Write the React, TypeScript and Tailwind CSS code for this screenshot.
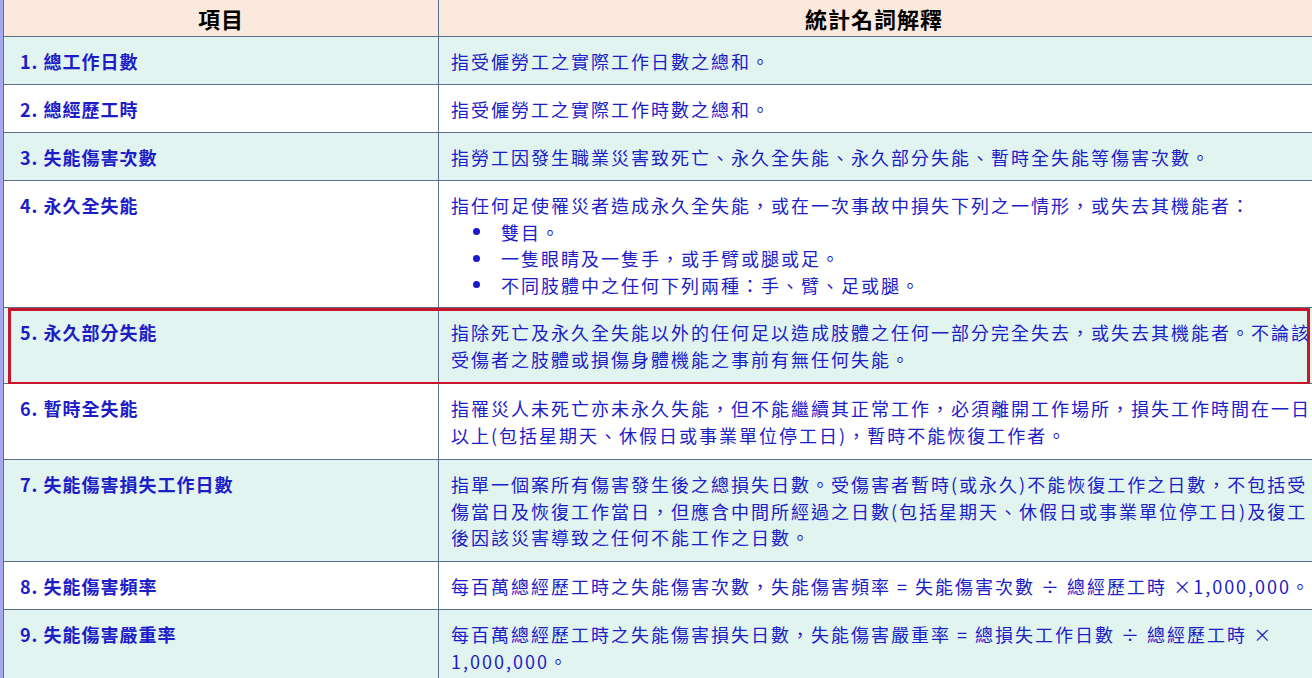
import React from "react";

const rows: { t: string; d: React.ReactNode; red?: boolean; h: number }[] = [
  { t: "1. 總工作日數", d: "指受僱勞工之實際工作日數之總和。", h: 48 },
  { t: "2. 總經歷工時", d: "指受僱勞工之實際工作時數之總和。", h: 48 },
  { t: "3. 失能傷害次數", d: "指勞工因發生職業災害致死亡、永久全失能、永久部分失能、暫時全失能等傷害次數。", h: 48 },
  {
    t: "4. 永久全失能",
    d: (
      <>
        <div>指任何足使罹災者造成永久全失能，或在一次事故中損失下列之一情形，或失去其機能者：</div>
        {["雙目。", "一隻眼睛及一隻手，或手臂或腿或足。", "不同肢體中之任何下列兩種：手、臂、足或腿。"].map((s) => (
          <div key={s} className="flex items-center">
            <span className="w-[50px] flex justify-center"><span className="w-[7px] h-[7px] rounded-full bg-[#1a1acc]" /></span>
            <span>{s}</span>
          </div>
        ))}
      </>
    ),
    h: 127,
  },
  {
    t: "5. 永久部分失能",
    d: (
      <>
        指除死亡及永久全失能以外的任何足以造成肢體之任何一部分完全失去，或失去其機能者。不論該
        <br />
        受傷者之肢體或損傷身體機能之事前有無任何失能。
      </>
    ),
    red: true,
    h: 76,
  },
  {
    t: "6. 暫時全失能",
    d: (
      <>
        指罹災人未死亡亦未永久失能，但不能繼續其正常工作，必須離開工作場所，損失工作時間在一日
        <br />
        以上(包括星期天、休假日或事業單位停工日)，暫時不能恢復工作者。
      </>
    ),
    h: 76,
  },
  {
    t: "7. 失能傷害損失工作日數",
    d: (
      <>
        指單一個案所有傷害發生後之總損失日數。受傷害者暫時(或永久)不能恢復工作之日數，不包括受
        <br />
        傷當日及恢復工作當日，但應含中間所經過之日數(包括星期天、休假日或事業單位停工日)及復工
        <br />
        後因該災害導致之任何不能工作之日數。
      </>
    ),
    h: 102,
  },
  { t: "8. 失能傷害頻率", d: "每百萬總經歷工時之失能傷害次數，失能傷害頻率 = 失能傷害次數 ÷ 總經歷工時 ×1,000,000。", h: 48 },
  {
    t: "9. 失能傷害嚴重率",
    d: (
      <>
        每百萬總經歷工時之失能傷害損失日數，失能傷害嚴重率 = 總損失工作日數 ÷ 總經歷工時 ×
        <br />
        1,000,000。
      </>
    ),
    h: 80,
  },
];

export default function App() {
  return (
    <div
      className="w-[1312px] h-[678px] overflow-hidden bg-white flex"
      style={{ fontFamily: '"Noto Sans CJK TC", "Noto Sans", sans-serif' }}
    >
      <div className="w-[3px] shrink-0 bg-[#a8a8f0]" />
      <div className="w-[1340px] shrink-0 border-l border-[#5a6f8c]">
        <div className="flex h-[37px] bg-[#fbe9de] border-b border-[#5a6f8c] text-[22px] font-bold text-black tracking-[1px]">
          <div className="w-[435px] shrink-0 border-r border-[#5a6f8c] flex items-center justify-center">項目</div>
          <div className="w-[870px] flex items-center justify-center">統計名詞解釋</div>
        </div>
        {rows.map((r, i) => (
          <div
            key={i}
            className={`relative flex border-b border-[#5a6f8c] text-[18px] leading-[26.5px] tracking-[2px] text-[#1d1dc8] ${i % 2 === 0 ? "bg-[#e1f4f0]" : "bg-white"}`}
            style={{ height: r.h }}
          >
            <div className="w-[435px] shrink-0 border-r border-[#5a6f8c] pl-[16px] pt-[11px] font-bold text-[18px] tracking-[1px]">{r.t}</div>
            <div className="pl-[12px] pt-[11px] whitespace-nowrap">{r.d}</div>
            {r.red && <div className="absolute left-[4px] top-0 w-[1302px] h-[77px] border-[3px] border-[#c8152a]" />}
          </div>
        ))}
      </div>
    </div>
  );
}
